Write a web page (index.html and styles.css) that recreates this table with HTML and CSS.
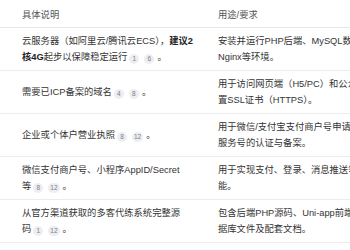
FILE: index.html
```html
<!DOCTYPE html>
<html lang="zh">
<head>
<meta charset="utf-8">
<link rel="stylesheet" href="styles.css">
</head>
<body>
<div class="wrap">
<table class="req">
  <colgroup><col class="c1"><col class="c2"></colgroup>
  <thead>
    <tr><th>具体说明</th><th>用途/要求</th></tr>
  </thead>
  <tbody>
    <tr>
      <td>云服务器（如阿里云/腾讯云ECS），<b>建议2核4G</b>起步以保障稳定运<span class="nw">行<span class="cites"><span class="cite">1</span><span class="cite">6</span></span>。</span></td>
      <td>安装并运行PHP后端、MySQL数据库、Nginx等环境。</td>
    </tr>
    <tr>
      <td>需要已ICP备案的域<span class="nw">名<span class="cites"><span class="cite">4</span><span class="cite">8</span></span>。</span></td>
      <td>用于访问网页端（H5/PC）和公众号，需配置SSL证书（HTTPS）。</td>
    </tr>
    <tr>
      <td>企业或个体户营业执<span class="nw">照<span class="cites"><span class="cite">8</span><span class="cite">12</span></span>。</span></td>
      <td>用于微信/支付宝支付商户号申请及公众号、服务号的认证与备案。</td>
    </tr>
    <tr>
      <td>微信支付商户号、小程序AppID/Secret<span class="nw">等<span class="cites"><span class="cite">8</span><span class="cite">12</span></span>。</span></td>
      <td>用于实现支付、登录、消息推送等核心功能。</td>
    </tr>
    <tr>
      <td>从官方渠道获取的多客代练系统完整源<span class="nw">码<span class="cites"><span class="cite">1</span><span class="cite">12</span></span>。</span></td>
      <td>包含后端PHP源码、Uni-app前端源码、数据库文件及配套文档。</td>
    </tr>
  </tbody>
</table>
</div>
</body>
</html>
```
FILE: styles.css
```css
html, body {
  margin: 0;
  padding: 0;
  background: #fff;
  overflow: hidden;
}
.wrap {
  width: 350px;
  overflow: hidden;
}
.req {
  border-collapse: collapse;
  table-layout: fixed;
  width: 408px;
  font-family: "Liberation Sans", "Noto Sans CJK SC", sans-serif;
  font-size: 9.3px;
  line-height: 16px;
  color: #333;
}
.c1 { width: 208px; }
.c2 { width: 200px; }
.req th {
  text-align: left;
  font-weight: normal;
  color: #555;
  padding: 7px 10px 4px;
  border-bottom: 1px solid #e6e6e6;
}
.req td {
  padding: 5px 10px;
  vertical-align: middle;
  border-bottom: 1px solid #ececec;
}
.req th:first-child, .req td:first-child {
  padding-left: 22px;
}
.req b {
  font-weight: bold;
  color: #222;
}
.nw {
  white-space: nowrap;
}
.cites {
  display: inline-flex;
  gap: 5px;
  margin: 0 3px 0 2px;
  vertical-align: -1px;
}
.cite {
  display: inline-flex;
  align-items: center;
  justify-content: center;
  min-width: 10px;
  height: 10px;
  box-sizing: border-box;
  padding: 0 2px;
  border-radius: 5px;
  background: #eceef1;
  color: #7a7f87;
  font-size: 6.5px;
  line-height: 10px;
}
```
